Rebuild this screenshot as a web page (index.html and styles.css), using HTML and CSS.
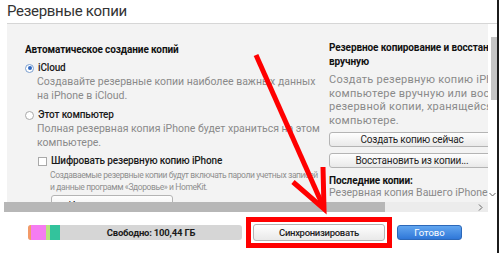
FILE: index.html
```html
<!DOCTYPE html>
<html lang="ru">
<head>
<meta charset="utf-8">
<title>Резервные копии</title>
<link rel="stylesheet" href="styles.css">
</head>
<body>
<div class="page">
  <h1 class="title">Резервные копии</h1>
  <div class="viewport">
    <div class="panel">
      <div class="cols">
        <div class="col-left">
          <div class="heading">Автоматическое создание копий</div>
          <div class="option">
            <span class="radio checked"></span>
            <span class="label">iCloud</span>
          </div>
          <div class="desc">Создавайте резервные копии наиболее важных данных<br>на iPhone в iCloud.</div>
          <div class="option option-2">
            <span class="radio"></span>
            <span class="label">Этот компьютер</span>
          </div>
          <div class="desc">Полная резервная копия iPhone будет храниться на этом<br>компьютере.</div>
          <div class="check-row">
            <span class="checkbox"></span>
            <span class="label">Шифровать резервную копию iPhone</span>
          </div>
          <div class="small">Создаваемые резервные копии будут включать пароли учетных записей<br>и данные программ «Здоровье» и HomeKit.</div>
          <div class="btn btn-pass">Изменить пароль...</div>
        </div>
        <div class="col-right">
          <div class="heading">Резервное копирование и восстановление<br>вручную</div>
          <div class="desc desc-r">Создать резервную копию iPhone на этом<br>компьютере вручную или восстановить из<br>резервной копии, хранящейся на этом<br>компьютере.</div>
          <div class="btn btn-r">Создать копию сейчас</div>
          <div class="btn btn-r btn-r2">Восстановить из копии...</div>
          <div class="heading heading-last">Последние копии:</div>
          <div class="desc desc-last">Резервная копия Вашего iPhone никогда не создавалась на этом компьютере.</div>
        </div>
      </div>
    </div>
    <div class="vscroll">
      <div class="vthumb"></div>
      <svg class="vdown" width="7" height="5" viewBox="0 0 7 5"><polyline points="0.5,1 3.5,4 6.5,1" fill="none" stroke="#666" stroke-width="1"/></svg>
    </div>
  </div>
  <div class="hscroll">
    <div class="hthumb"></div>
    <div class="htrack">
      <svg class="hright" width="5" height="7" viewBox="0 0 5 7"><polyline points="1,0.5 4,3.5 1,6.5" fill="none" stroke="#666" stroke-width="1"/></svg>
    </div>
  </div>
  <div class="bottom">
    <div class="storage">
      <span class="seg seg-orange"></span>
      <span class="seg seg-pink"></span>
      <span class="seg seg-green"></span>
      <span class="seg seg-teal"></span>
      <span class="seg-free">Свободно: 100,44 ГБ</span>
    </div>
    <div class="highlight">
      <div class="btn btn-sync">Синхронизировать</div>
    </div>
    <div class="btn-done">Готово</div>
  </div>
  <svg class="arrow" width="500" height="253" viewBox="0 0 500 253">
    <line x1="256" y1="55" x2="323" y2="206" stroke="#f00" stroke-width="5"/>
    <polyline points="293,182 324,209 323,167" fill="none" stroke="#f00" stroke-width="5" stroke-linejoin="miter"/>
  </svg>
</div>
</body>
</html>
```
FILE: styles.css
```css
* { box-sizing: border-box; }
html, body { margin: 0; padding: 0; }
body {
  width: 500px;
  height: 253px;
  background: #fff;
  font-family: Roboto, "Noto Sans", sans-serif;
  color: #222;
  overflow: hidden;
}
.page {
  position: relative;
  width: 499px;
  height: 253px;
  border-right: 2px solid #1c1c1c;
  display: flex;
  flex-direction: column;
}
.title {
  margin: 0;
  height: 23px;
  padding-left: 7px;
  font-size: 15px;
  font-weight: normal;
  letter-spacing: -0.3px;
  line-height: 22px;
  color: #333;
}
.viewport {
  display: flex;
  height: 179px;
  margin-left: 7px;
  border-top: 1px solid #d6d6d6;
}
.panel {
  flex: 1;
  background: #f3f3f3;
  overflow: hidden;
}
.cols {
  display: grid;
  grid-template-columns: 304px 230px;
  padding: 19px 0 0 18px;
}
.heading {
  font-size: 10px;
  font-weight: bold;
  letter-spacing: -0.1px;
  line-height: 14px;
  color: #111;
  white-space: nowrap;
}
.option {
  display: flex;
  align-items: center;
  gap: 4px;
  height: 14px;
  margin-top: 4px;
}
.option-2 { margin-top: 5px; }
.label {
  font-size: 10px;
  font-weight: 500;
  letter-spacing: -0.15px;
  line-height: 14px;
  color: #1a1a1a;
  white-space: nowrap;
}
.radio {
  width: 9px;
  height: 9px;
  border-radius: 50%;
  border: 1px solid #a9a9a9;
  background: #fff;
  flex: none;
  position: relative;
}
.radio.checked { border-color: #7b9fcf; }
.radio.checked::after {
  content: "";
  position: absolute;
  left: 1.5px;
  top: 1.5px;
  width: 4px;
  height: 4px;
  border-radius: 50%;
  background: #2f68c2;
}
.desc {
  padding-left: 12px;
  font-size: 10.5px;
  line-height: 14px;
  color: #8a8a8a;
  white-space: nowrap;
}
.check-row {
  display: flex;
  align-items: center;
  gap: 4px;
  height: 14px;
  margin-top: 4px;
  padding-left: 13px;
}
.checkbox {
  width: 9px;
  height: 9px;
  border: 1px solid #a9a9a9;
  background: #fff;
  flex: none;
}
.small {
  margin-top: 1px;
  padding-left: 25px;
  font-size: 8.5px;
  line-height: 12px;
  letter-spacing: -0.4px;
  color: #8f8f8f;
  white-space: nowrap;
}
.btn {
  height: 15px;
  border: 1px solid #b4b4b4;
  border-radius: 3px;
  background: linear-gradient(#fefefe, #e9e9e9);
  font-size: 10px;
  letter-spacing: -0.2px;
  line-height: 13px;
  text-align: center;
  color: #1e1e1e;
  white-space: nowrap;
}
.btn-pass {
  width: 122px;
  height: 18px;
  margin: 2px 0 0 26px;
  line-height: 19px;
}
.col-right { margin-top: -2px; }
.col-right .desc { padding-left: 0; }
.desc-r {
  margin-top: 4px;
  font-size: 11px;
  letter-spacing: 0.25px;
  line-height: 13.5px;
}
.btn-r {
  width: 166px;
  margin-top: 5px;
}
.btn-r2 { margin-top: 6px; }
.heading-last {
  margin-top: 7px;
  line-height: 12px;
}
.desc-last { line-height: 12px; }
.vscroll {
  width: 9px;
  background: #fff;
  position: relative;
  display: flex;
  flex-direction: column;
  align-items: center;
}
.vthumb {
  width: 6px;
  height: 63px;
  margin-top: 13px;
  margin-left: 2px;
  background: #c4c4c4;
}
.vdown { margin-top: auto; margin-bottom: 5px; }
.hscroll {
  display: flex;
  height: 10px;
  margin-left: 4px;
  margin-right: 9px;
}
.hthumb {
  width: 381px;
  background: #b7b7b7;
}
.htrack {
  flex: 1;
  background: #ececec;
  display: flex;
  align-items: center;
  justify-content: flex-end;
  padding-right: 5px;
}
.bottom {
  display: flex;
  align-items: center;
  height: 41px;
  padding-left: 28px;
}
.storage {
  display: flex;
  width: 214px;
  height: 15px;
  border-radius: 3px;
  overflow: hidden;
  background: #d6d6d6;
}
.seg { height: 100%; }
.seg-orange { width: 3px; background: #f39a68; }
.seg-pink { width: 15px; background: #f57cf1; }
.seg-green { width: 4px; background: #b8e47e; }
.seg-teal { width: 10px; background: #33c39c; }
.seg-free {
  flex: 1;
  text-align: center;
  font-size: 9.5px;
  font-weight: bold;
  line-height: 15px;
  letter-spacing: -0.2px;
  color: #1b1b1b;
}
.highlight {
  margin-left: 4px;
  width: 146px;
  height: 31px;
  border: 5px solid #f00;
  padding: 2px;
  background: #fff;
}
.btn-sync {
  height: 17px;
  font-size: 9.5px;
  font-weight: 500;
  letter-spacing: -0.3px;
  line-height: 15px;
}
.btn-done {
  margin-left: 5px;
  width: 65px;
  height: 15px;
  border: 1px solid #2c68b9;
  border-radius: 3px;
  background: linear-gradient(#62a6f0, #2f77d8);
  color: #fff;
  font-size: 9.5px;
  line-height: 13px;
  text-align: center;
}
.arrow {
  position: absolute;
  left: 0;
  top: 0;
  pointer-events: none;
}
```
